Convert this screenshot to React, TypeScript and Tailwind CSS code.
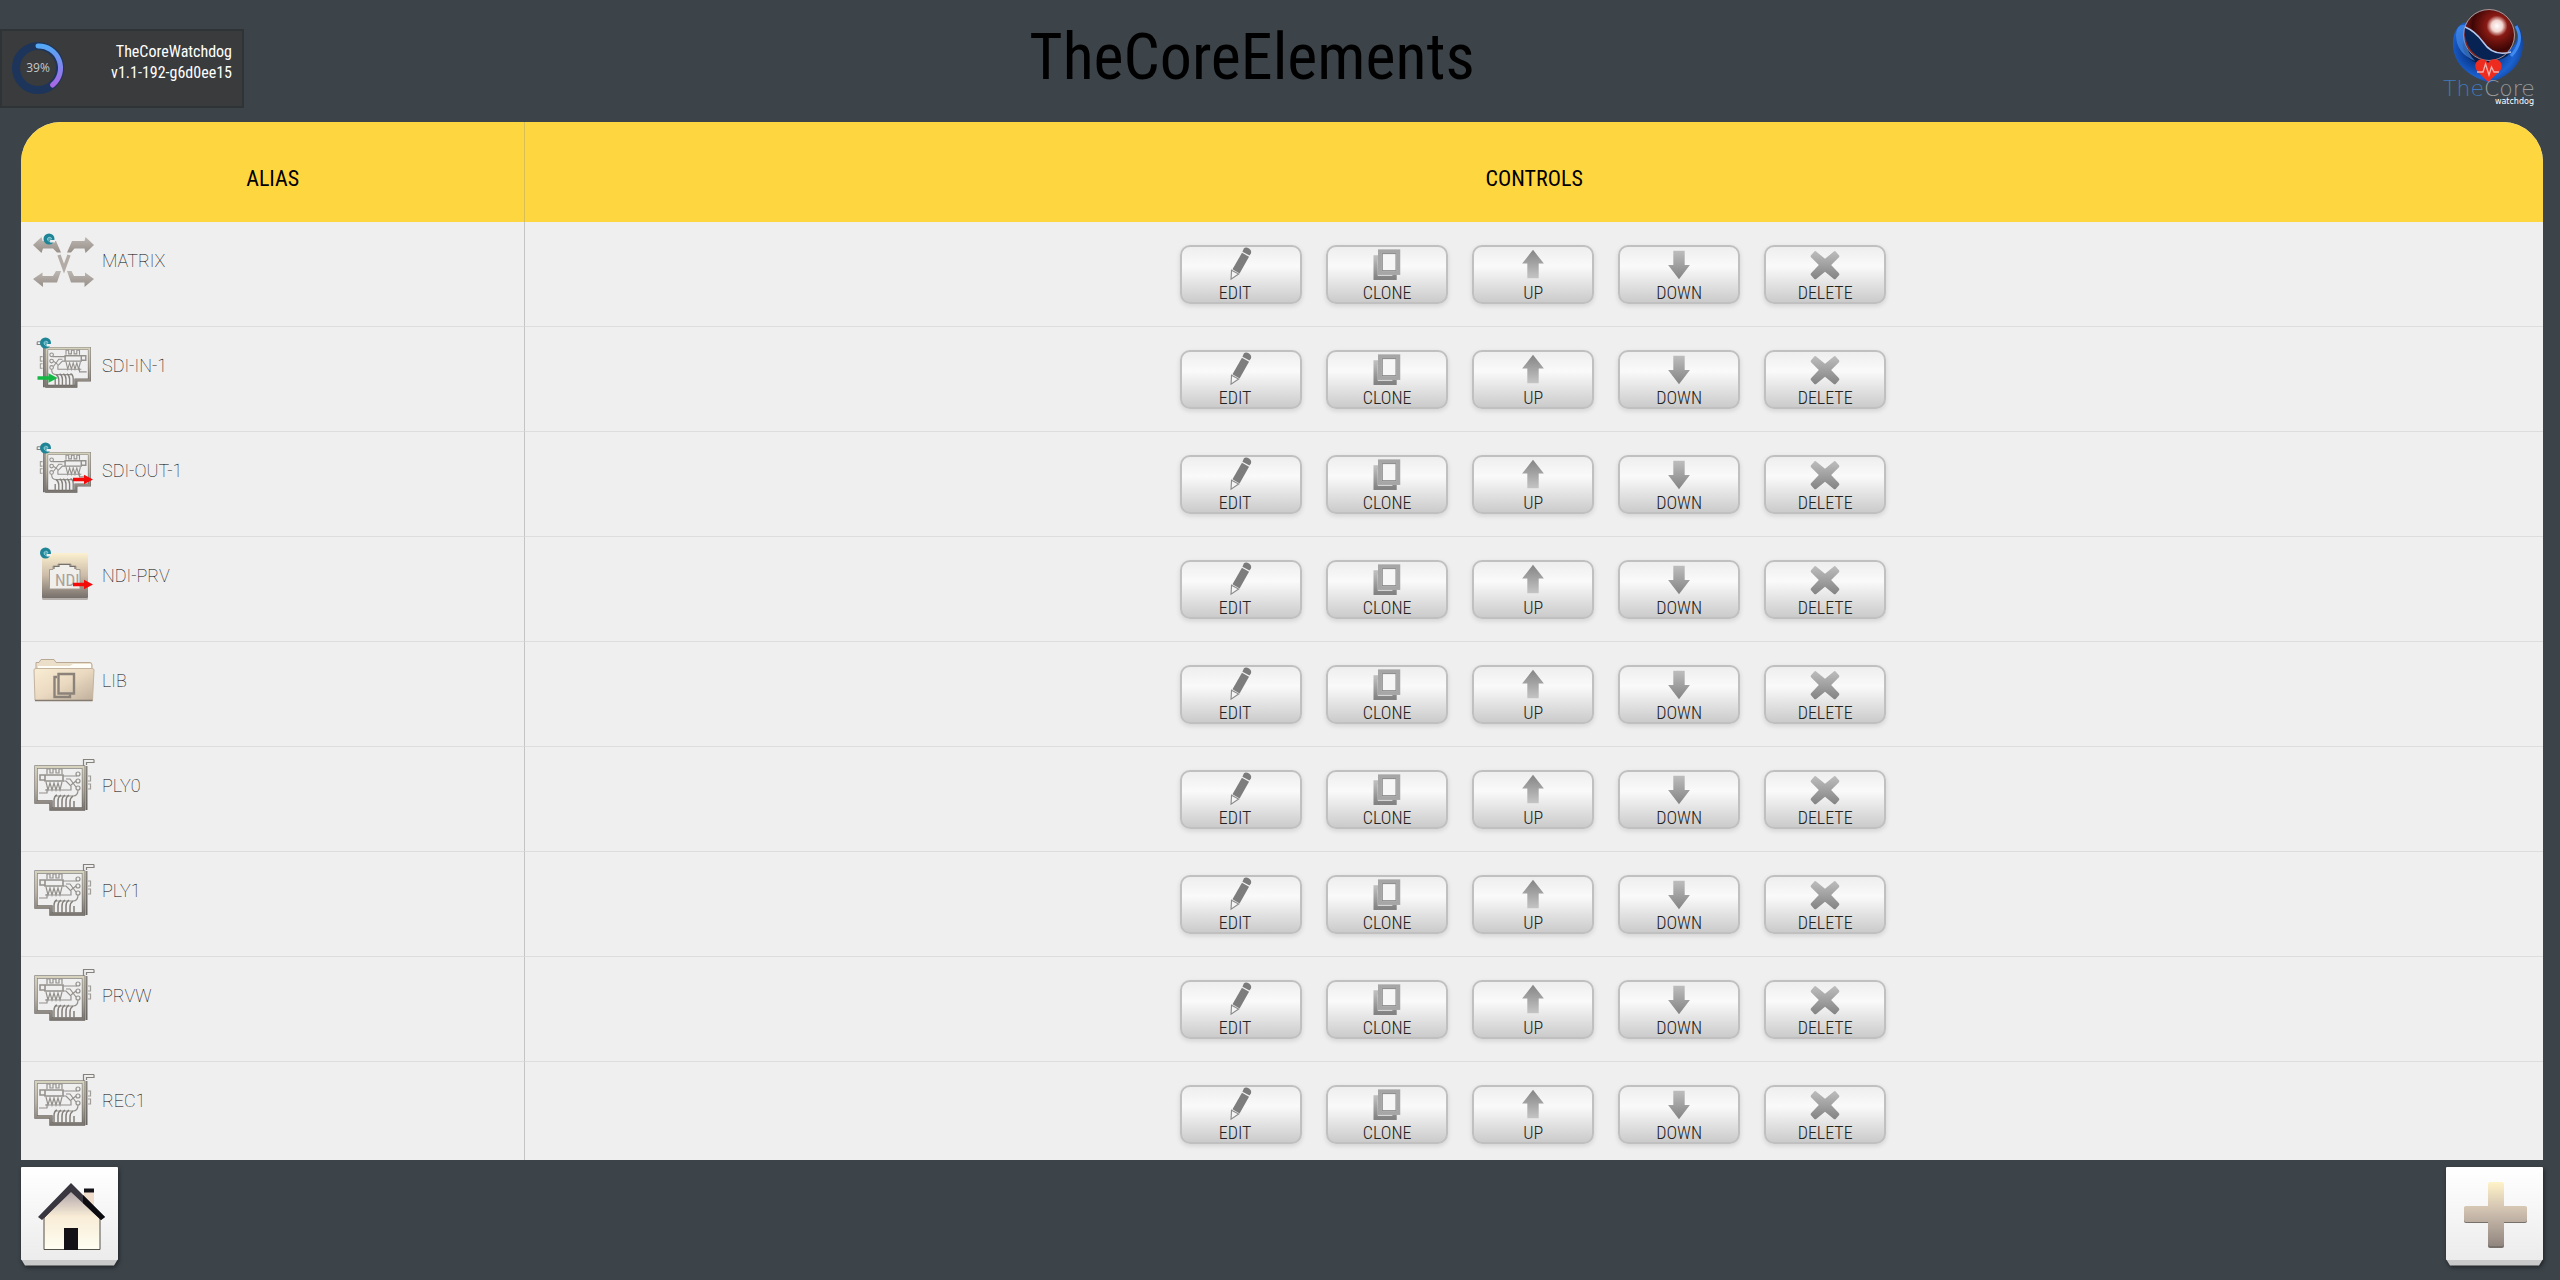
import type { ReactNode } from 'react';

type IconName = 'matrix' | 'sdi-in' | 'sdi-out' | 'ndi' | 'folder' | 'card';

interface CoreElement {
  alias: string;
  icon: IconName;
}

const elements: CoreElement[] = [
  { alias: 'MATRIX', icon: 'matrix' },
  { alias: 'SDI-IN-1', icon: 'sdi-in' },
  { alias: 'SDI-OUT-1', icon: 'sdi-out' },
  { alias: 'NDI-PRV', icon: 'ndi' },
  { alias: 'LIB', icon: 'folder' },
  { alias: 'PLY0', icon: 'card' },
  { alias: 'PLY1', icon: 'card' },
  { alias: 'PRVW', icon: 'card' },
  { alias: 'REC1', icon: 'card' },
];

const cpuLoad = 39;

/* Gradients shared by all the icons */
function Gradients() {
  return (
    <svg className="absolute w-0 h-0" aria-hidden="true">
      <defs>
        <linearGradient id="steel" x1="0" y1="0" x2="0" y2="1">
          <stop offset="0" stopColor="#bdb7b2" />
          <stop offset="1" stopColor="#978f88" />
        </linearGradient>
        <linearGradient id="board" gradientUnits="userSpaceOnUse" x1="0" y1="10" x2="0" y2="56">
          <stop offset="0" stopColor="#d8d5bf" />
          <stop offset="0.5" stopColor="#b9b1a4" />
          <stop offset="1" stopColor="#77726d" />
        </linearGradient>
        <linearGradient id="edge" gradientUnits="userSpaceOnUse" x1="0" y1="0" x2="0" y2="56">
          <stop offset="0" stopColor="#8f8c87" />
          <stop offset="1" stopColor="#66625e" />
        </linearGradient>
        <linearGradient id="sand" x1="0" y1="0" x2="0" y2="1">
          <stop offset="0" stopColor="#fbf0cf" />
          <stop offset="0.5" stopColor="#cbbba8" />
          <stop offset="1" stopColor="#77706b" />
        </linearGradient>
        <linearGradient id="paper" x1="0" y1="0" x2="1" y2="1">
          <stop offset="0" stopColor="#f8edd3" />
          <stop offset="0.5" stopColor="#ead9c0" />
          <stop offset="1" stopColor="#bfae9b" />
        </linearGradient>
        <linearGradient id="grey" x1="0" y1="0" x2="0" y2="1">
          <stop offset="0" stopColor="#bdbdbd" />
          <stop offset="1" stopColor="#838383" />
        </linearGradient>
        <linearGradient id="greyUp" x1="0" y1="0" x2="0" y2="1">
          <stop offset="0" stopColor="#858585" />
          <stop offset="1" stopColor="#c4c4c4" />
        </linearGradient>
        <linearGradient id="ring" x1="0" y1="0" x2="0" y2="1">
          <stop offset="0" stopColor="#55a8f5" />
          <stop offset="1" stopColor="#a868e8" />
        </linearGradient>
        <linearGradient id="tile" x1="0" y1="0" x2="0" y2="1">
          <stop offset="0" stopColor="#ffffff" />
          <stop offset="1" stopColor="#ececec" />
        </linearGradient>
        <linearGradient id="wall" x1="0" y1="0" x2="0" y2="1">
          <stop offset="0" stopColor="#a99da5" />
          <stop offset="0.45" stopColor="#f8ecd6" />
          <stop offset="1" stopColor="#fffef2" />
        </linearGradient>
        <linearGradient id="plus" x1="0" y1="0" x2="0" y2="1">
          <stop offset="0" stopColor="#fff3c8" />
          <stop offset="0.45" stopColor="#cfc0b0" />
          <stop offset="1" stopColor="#91867f" />
        </linearGradient>
        <radialGradient id="redBall" cx="0.66" cy="0.32" r="0.7">
          <stop offset="0" stopColor="#ffffff" />
          <stop offset="0.16" stopColor="#f2d4cf" />
          <stop offset="0.3" stopColor="#8a1a14" />
          <stop offset="0.7" stopColor="#3d0605" />
          <stop offset="1" stopColor="#8a2420" />
        </radialGradient>
        <radialGradient id="blueBall" cx="0.42" cy="0.44" r="0.62">
          <stop offset="0" stopColor="#04143a" />
          <stop offset="0.4" stopColor="#0b3a91" />
          <stop offset="0.75" stopColor="#1b62d0" />
          <stop offset="1" stopColor="#123f95" />
        </radialGradient>
      </defs>
    </svg>
  );
}

function Badge({ cx, cy }: { cx: number; cy: number }) {
  return (
    <g>
      <circle cx={cx} cy={cy} r="5.5" fill="#1f8496" />
      <path d={`M${cx + 1} ${cy + 1}h5v2.500h-5z`} fill="#efefef" />
      <path
        d={`M${cx - 1.5} ${cy}h4a2 2 0 1 0 -1 2`}
        fill="none"
        stroke="#8fd0d9"
        strokeWidth="1"
      />
    </g>
  );
}

function Arrow({ x, y, color }: { x: number; y: number; color: string }) {
  return <path d={`M${x} ${y - 1.7}h11v-3l9 4.7l-9 4.7v-3h-11z`} fill={color} />;
}

function Board() {
  return (
    <g fill="none" stroke="url(#board)">
      <path d="M4 12H51.5V54H19V47H4Z" stroke="url(#edge)" strokeWidth="3.400" />
      <path d="M4 12H51.5V54H19V47H4Z" strokeWidth="2" />
      <path d="M54.500 11V55" stroke="url(#edge)" strokeWidth="2" />
      <path d="M51.500 11V4.500H62M54.500 10V7.500H62V4.500" stroke="#85827e" strokeWidth="1.200" />
      <path d="M56 21h2.5v5H56M56 29h2.5v5H56" stroke="#a19d98" strokeWidth="1.2" />
      <g stroke="#94918d" strokeWidth="1.2">
        <path d="M13 20H31V26H13ZM8 20H13V25H8Z" strokeWidth="1.6" />
        <path d="M15 19v-5h3v4h3v-4h3v4h3v-4h3v5" />
        <path d="M14 27l2 8 2-7 2 7 2-7 2 7 2-7 2 7 2-8M13 35h26v-4l-5-5h-3" />
        <path d="M31 21h14M34 24h4l6 8" />
        <circle cx="46" cy="19" r="2" />
        <circle cx="46" cy="26" r="2" />
        <circle cx="46" cy="33" r="2" />
        <path d="M7 38h8v-4M23 41h18q5 0 5-6M39 30l5-4" />
      </g>
      <path
        d="M22 53v-7q0-5 3-6M26 53v-7q0-4 3-6M30 53v-7q0-4 3-6M34 53v-7q0-4 3-6M38 53v-6q0-4 3-6M42 53v-7"
        stroke="#837f7a"
        strokeWidth="1.5"
      />
    </g>
  );
}

function ElementIcon({ name }: { name: IconName }) {
  return (
    <svg viewBox="0 0 64 64" className="w-16 h-16 shrink-0" aria-hidden="true">
      {name === 'matrix' && (
        <>
          <g fill="url(#steel)">
            <path d="M1 15L9.5 7L10.5 11H24L29 22.5H25L21 18.5H11L9.5 23Z" />
            <path d="M62 15L53.5 7L52.5 11H40L35 22.5H39L42.5 18.5H52.5L53.5 23Z" />
            <path d="M1 49L10.5 42.5V46H21L24 41H29L25 52.5H11V57Z" />
            <path d="M62 49L53 42.5V46H42L39.5 41H35L39 52.5H52.5V57Z" />
          </g>
          <path d="M27 25L32 38.5L37 25" fill="none" stroke="#b3aca6" strokeWidth="3.4" />
          <Badge cx={17} cy={9} />
        </>
      )}
      {(name === 'sdi-in' || name === 'sdi-out') && (
        <>
          <g transform="translate(61 2.7) scale(-0.9 0.9)">
            <Board />
          </g>
          <Badge cx={13.5} cy={8} />
          {name === 'sdi-in' ? (
            <Arrow x={5.5} y={43} color="#16b845" />
          ) : (
            <Arrow x={41} y={39.5} color="#f50a0a" />
          )}
        </>
      )}
      {name === 'ndi' && (
        <>
          <rect x="10" y="9" width="46" height="46" rx="1.5" fill="#b5b0ab" />
          <rect x="10" y="8" width="46" height="45" rx="1.5" fill="url(#sand)" />
          <path
            d="M17.5 44V24.5H21V21H26V19H39V21H44V24.5H48V44Z"
            fill="#f1efec"
            stroke="#a39a90"
            strokeWidth="1"
          />
          <path d="M22 24V21.500H27V19.500H38V21.500H43V24" fill="none" stroke="#77716b" strokeWidth="1.200" />
          <text x="23" y="41" fontSize="17" fontFamily="Roboto Condensed, Roboto, sans-serif" fill="#a9a29b">
            NDI
          </text>
          <Badge cx={13.5} cy={8} />
          <Arrow x={41} y={39.5} color="#f50a0a" />
        </>
      )}
      {name === 'folder' && (
        <>
          <path d="M4 20V12.5H7L9 9.5H22L24 12.5H58Q60 12.5 60 15V20Z" fill="#ecdfca" stroke="#b9a893" strokeWidth="1" />
          <path d="M6 18V16H38L41 14H59V20H6Z" fill="#fffdf7" />
          <path d="M2 20Q2 18.5 4 18.5H60Q62 18.5 62 20L60.5 50.5H3Z" fill="url(#paper)" stroke="#c3b39f" strokeWidth="1" />
          <path d="M3 50.5H60.5" stroke="#837a70" strokeWidth="1.6" />
          <g fill="none" stroke="#8b837a" strokeWidth="2.4">
            <path d="M25 27H22.5V47H38V44.5" />
            <path d="M26.5 24H42V43.5H26.5Z" />
          </g>
        </>
      )}
      {name === 'card' && <Board />}
    </svg>
  );
}

const controls: { label: string; icon: ReactNode }[] = [
  {
    label: 'EDIT\u00a0\u00a0\u00a0',
    icon: (
      <>
        <path d="M19 1.5Q21 -0.5 24.5 1.5Q27.5 3.5 26.5 6.5L25 9L17.5 5Z" fill="#7b7b7b" />
        <path d="M17 6.200L24.500 10.200L14.500 28L7 23.500Z" fill="#7d7d7d" />
        <path d="M6 24.500L13.500 28.500L5.500 34Z" fill="#f4f4f4" stroke="#8a8a8a" strokeWidth="1.2" />
      </>
    ),
  },
  {
    label: 'CLONE',
    icon: (
      <>
        <path d="M7 11H4V32.500H24V29" fill="none" stroke="url(#grey)" strokeWidth="4.500" />
        <rect x="8.500" y="4.500" width="19.500" height="23" fill="#f6f6f6" stroke="#a6a6a6" strokeWidth="4" />
        <rect x="11" y="7" width="14.500" height="18" fill="none" stroke="#808080" strokeWidth="1" />
      </>
    ),
  },
  {
    label: 'UP',
    icon: <path d="M16 3L27.500 17.500H22V33H10V17.500H4.500Z" fill="url(#greyUp)" />,
  },
  {
    label: 'DOWN',
    icon: <path d="M10 4H22V19H27.500L16 34L4.500 19H10Z" fill="url(#grey)" />,
  },
  {
    label: 'DELETE',
    icon: (
      <path
        d="M5 4.500Q6 4 7 5L16 12.500L25 5Q26 4 27 4.500L31 9Q31.500 10 30.500 11L22.500 19L30.500 27.500Q31.500 28.500 31 29.500L27 34Q26 34.500 25 33.500L16 26L7 33.500Q6 34.500 5 34L1 29.500Q0.500 28.500 1.500 27.500L9.500 19L1.500 11Q0.500 10 1 9Z"
        fill="url(#grey)"
      />
    ),
  },
];

function ControlButton({ label, icon }: { label: string; icon: ReactNode }) {
  return (
    <button
      type="button"
      className="flex flex-col items-center w-[122px] h-[59px] rounded-[10px] border-2 border-[#c0c0c0] bg-linear-to-b from-[#eeeeee] via-[#fafafa] via-35% to-[#cbcbcb] shadow-[0_2px_5px_rgba(0,0,0,0.12)]"
    >
      <svg viewBox="0 0 32 38" className="w-8 h-9 shrink-0" aria-hidden="true">
        {icon}
      </svg>
      <span className="font-['Roboto_Condensed',Roboto,sans-serif] font-light text-lg leading-5 text-[#222222]">
        {label}
      </span>
    </button>
  );
}

function LoadRing() {
  return (
    <svg viewBox="0 0 54 54" className="w-[54px] h-[54px]" role="img" aria-label={`${cpuLoad}%`}>
      <circle cx="27" cy="27" r="22" fill="none" stroke="#1d355b" strokeWidth="8" />
      <path
        d="M27 5A22 22 0 0 1 41.5 44"
        fill="none"
        stroke="url(#ring)"
        strokeWidth="5"
        strokeLinecap="round"
      />
      <text x="27" y="31" textAnchor="middle" fontSize="12" fontFamily="Open Sans, sans-serif" fill="#c8c8c8">
        {cpuLoad}%
      </text>
    </svg>
  );
}

function Logo() {
  return (
    <svg viewBox="0 0 96 100" className="w-24 h-[100px]" role="img" aria-label="TheCore watchdog">
      <path
        d="M20 14Q9 20 10 38Q12 58 34 69L46 74L58 69Q80 57 80 35Q80 20 72 14Q80 38 60 43Q40 42 32 20Q26 12 20 14Z"
        fill="url(#blueBall)"
      />
      <ellipse cx="42" cy="37" rx="22" ry="18" fill="#03102c" opacity="0.6" />
      <circle cx="46" cy="26" r="25" fill="url(#redBall)" />
      <path d="M22 18Q32 22 40 33Q52 48 68 43Q60 54 42 51Q20 42 22 18Z" fill="#062353" />
      <path d="M22 18Q32 22 40 33Q50 48 68 43" fill="none" stroke="#b6c8ee" strokeWidth="1.5" />
      <circle cx="46" cy="26" r="25.5" fill="none" stroke="#c9a6a6" strokeWidth="1" opacity="0.8" />
      <path d="M13 26Q14 14 22 16Q18 36 32 52Q13 44 13 26Z" fill="#4c94f0" opacity="0.6" />
      <path d="M73 17Q82 32 68 47" fill="none" stroke="#3f8af0" strokeWidth="3" />
      <path
        d="M45 73L34 62Q30 55 35 51.500Q41 48 45 54Q49 48 56 51.500Q61 56 57 62Z"
        fill="#ee2b1f"
      />
      <path d="M34 63H40L42.500 55L46 66L48.500 58L51 63H56" fill="none" stroke="#f3b0ac" strokeWidth="1.3" />
      <text x="0" y="87" fontSize="22" fontWeight="200" fontFamily="DejaVu Sans, sans-serif" fill="#3f78bd">
        The<tspan fill="#9a9a9a">Core</tspan>
      </text>
      <text x="91" y="95" textAnchor="end" fontSize="8" fontFamily="DejaVu Sans, sans-serif" fill="#ffffff">
        watchdog
      </text>
    </svg>
  );
}

function TileButton({ label, children }: { label: string; children: ReactNode }) {
  return (
    <button type="button" aria-label={label} className="drop-shadow-[1px_2px_2px_rgba(0,0,0,0.5)]">
      <svg viewBox="0 0 97 99" className="w-[97px] h-[99px]">
        <path d="M0 92L4 98.5H93L97 92Z" fill="#c9c9c9" />
        <rect width="97" height="93" rx="1" fill="url(#tile)" />
        {children}
      </svg>
    </button>
  );
}

export default function App() {
  return (
    <div className="h-screen flex flex-col overflow-hidden bg-[#3c444a] font-['Roboto_Condensed',Roboto,sans-serif]">
      <Gradients />

      {/* Header */}
      <header className="h-[122px] shrink-0 flex items-start">
        <div className="mt-[29px] w-[244px] h-[79px] shrink-0 flex items-start justify-between border-2 border-[#2e3335] bg-[#393b3c] pl-[9px] pr-[10px] pt-[10px]">
          <LoadRing />
          <p className="text-right text-base leading-[21px] text-white">
            TheCoreWatchdog
            <br />
            v1.1-192-g6d0ee15
          </p>
        </div>
        <h1 className="flex-1 pt-[20px] text-center text-[64px] leading-[76px] text-black">TheCoreElements</h1>
        <div className="w-[300px] shrink-0 flex justify-end pt-[9px] pr-[21px]">
          <Logo />
        </div>
      </header>

      {/* Element list */}
      <main className="flex-1 min-h-0 ml-[21px] mr-[17px] overflow-hidden rounded-t-[40px] bg-[#efefef]">
        <table className="w-full table-fixed border-separate border-spacing-0">
          <thead>
            <tr className="h-[100px] bg-[#fed640] text-[22px] text-black">
              <th className="w-1/5 border-r border-[#d9bd55] pt-3 font-normal">ALIAS</th>
              <th className="pt-3 font-normal">CONTROLS</th>
            </tr>
          </thead>
          <tbody>
            {elements.map((element) => (
              <tr key={element.alias} className="h-[105px]">
                <td className="border-r border-b border-r-[#c4c4c4] border-b-[#dddddd] p-0 align-top">
                  <div className="flex items-start gap-[6px] pl-[11px] pt-2">
                    <ElementIcon name={element.icon} />
                    <span className="pt-5 font-[Roboto,sans-serif] font-thin text-lg leading-[22px] text-black">
                      {element.alias}
                    </span>
                  </div>
                </td>
                <td className="border-b border-[#dddddd] p-0 align-top">
                  <div className="flex justify-center gap-6 pt-[23px] pr-[2px]">
                    {controls.map((control) => (
                      <ControlButton key={control.label} label={control.label} icon={control.icon} />
                    ))}
                  </div>
                </td>
              </tr>
            ))}
          </tbody>
        </table>
      </main>

      {/* Footer */}
      <footer className="h-[120px] shrink-0 flex items-start justify-between pl-[21px] pr-[17px] pt-[7px]">
        <TileButton label="Home">
          <path d="M63 25H73V45L63 36Z" fill="#f0dccb" />
          <rect x="63" y="21.5" width="10" height="4" fill="#15131a" />
          <path d="M50 22L79 51V82.5H23V51Z" fill="url(#wall)" stroke="#55504a" strokeWidth="1" />
          <path d="M50 16L84 50L80 53L50 25L21 53L17 50Z" fill="#39363f" />
          <path d="M62 28L84 50L80 53L62 36Z" fill="#0c0b10" />
          <rect x="43" y="61" width="14" height="22" fill="#131116" />
        </TileButton>
        <TileButton label="Add element">
          <path
            d="M44 17H56Q58 17 58 19V40H79Q81 40 81 42V54Q81 56 79 56H58V79Q58 81 56 81H44Q42 81 42 79V56H20Q18 56 18 54V42Q18 40 20 40H42V19Q42 17 44 17Z"
            fill="#77706a"
          />
          <path
            d="M44 15H56Q58 15 58 17V39H79Q81 39 81 41V53Q81 55 79 55H58V77Q58 79 56 79H44Q42 79 42 77V55H20Q18 55 18 53V41Q18 39 20 39H42V17Q42 15 44 15Z"
            fill="url(#plus)"
          />
        </TileButton>
      </footer>
    </div>
  );
}
